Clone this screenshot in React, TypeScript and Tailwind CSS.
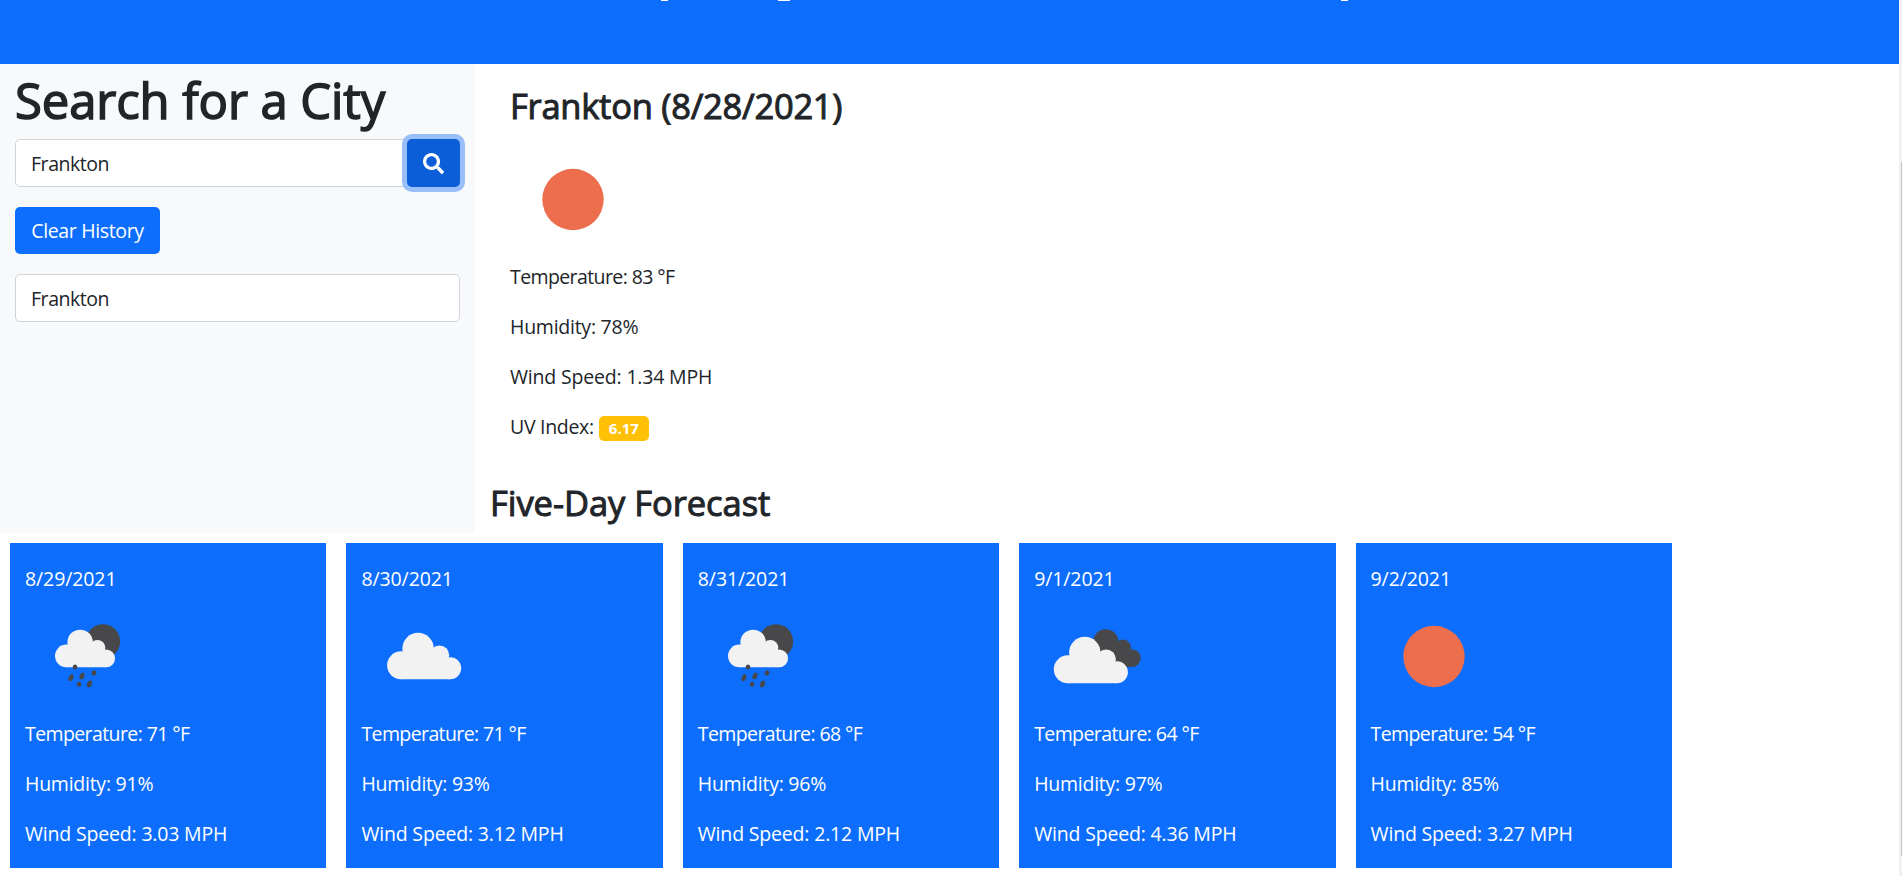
import React from "react";
import { FaSearch } from "react-icons/fa";

type IconKind = "sun" | "rain" | "cloud" | "broken";

interface Day {
  date: string;
  icon: IconKind;
  temp: string;
  humidity: string;
  wind: string;
}

const days: Day[] = [
  { date: "8/29/2021", icon: "rain", temp: "71", humidity: "91", wind: "3.03" },
  { date: "8/30/2021", icon: "cloud", temp: "71", humidity: "93", wind: "3.12" },
  { date: "8/31/2021", icon: "rain", temp: "68", humidity: "96", wind: "2.12" },
  { date: "9/1/2021", icon: "broken", temp: "64", humidity: "97", wind: "4.36" },
  { date: "9/2/2021", icon: "sun", temp: "54", humidity: "85", wind: "3.27" },
];

const drops = [
  [50, 73, 2],
  [46, 83.7, 3.2],
  [57, 82, 3.2],
  [69, 79, 2.2],
  [54, 90.3, 2],
  [64.5, 90, 3.2],
];

function Cloud({ fill, transform }: { fill: string; transform?: string }) {
  return (
    <g fill={fill} transform={transform}>
      <circle cx="56.7" cy="55" r="15.7" />
      <circle cx="39.7" cy="71.8" r="14" />
      <circle cx="78" cy="61.8" r="9.8" />
      <circle cx="88.8" cy="74.8" r="11" />
      <path d="M42 57 L71 55 L87 66 L88.8 85.8 L39.7 85.8 Z" />
    </g>
  );
}

function WeatherIcon({ kind }: { kind: IconKind }) {
  return (
    <svg className="block h-[125px] w-[125px]" viewBox="0 0 125 125">
      {kind === "sun" && <circle cx="63" cy="62.5" r="30.7" fill="#ec6e4c" />}
      {kind === "cloud" && <Cloud fill="#f2f2f2" transform="translate(.4 -.5)" />}
      {kind === "broken" && (
        <>
          <Cloud fill="#48484a" transform="translate(25.8 3.5) scale(.81)" />
          <Cloud fill="#f2f2f2" transform="translate(-5.9 3.5)" />
        </>
      )}
      {kind === "rain" && (
        <>
          <circle cx="78" cy="47.5" r="17.2" fill="#48484a" />
          <Cloud fill="#f2f2f2" transform="translate(9.2 3.8) scale(.81)" />
          {drops.map(([x, y, r]) => (
            <ellipse
              key={`${x}-${y}`}
              cx={x}
              cy={y}
              rx="2.3"
              ry={r + 0.4}
              fill="#48484a"
              transform={`rotate(25 ${x} ${y})`}
            />
          ))}
        </>
      )}
    </svg>
  );
}

function Readings({ temp, humidity, wind }: { temp: string; humidity: string; wind: string }) {
  return (
    <>
      <p className="tracking-[-0.6px]">Temperature: {temp} °F</p>
      <p className="tracking-[-0.25px]">Humidity: {humidity}%</p>
      <p className="tracking-[-0.18px]">Wind Speed: {wind} MPH</p>
    </>
  );
}

function DayCard({ day }: { day: Day }) {
  return (
    <div className="h-[325px] w-[316.4px] bg-[#0d6efd] px-[15px] pt-[21px] text-white">
      <p className="tracking-[-0.1px]">{day.date}</p>
      <WeatherIcon kind={day.icon} />
      <div className="flex flex-col gap-5">
        <Readings temp={day.temp} humidity={day.humidity} wind={day.wind} />
      </div>
    </div>
  );
}

export default function App() {
  return (
    <div className="flex h-[876px] w-full overflow-hidden bg-white font-['Open_Sans','Noto_Sans',sans-serif] text-[19.5px] leading-[30px] tracking-[-0.2px] text-[#212529]">
      <div className="flex w-[1899px] shrink-0 flex-col">
        <header className="h-16 shrink-0 bg-[#0d6efd]">
          <svg className="block h-px w-full" viewBox="0 0 1899 1" fill="#fff">
            <rect x="661" width="7" height="1" />
            <rect x="778" width="12" height="1" />
            <rect x="1341" width="7" height="1" />
          </svg>
        </header>
        <div className="flex h-[469px] shrink-0">
          <aside className="w-[474.75px] shrink-0 bg-[#f8f9fa] px-[15px]">
            <h1 className="mb-[10px] h-[65px] pt-[6px] text-[49px] leading-[60px] tracking-[-0.1px] whitespace-nowrap [-webkit-text-stroke:1.5px_#212529]">
              Search for a City
            </h1>
            <div className="flex h-12 w-[445px] tracking-[-0.45px]">
              <div className="flex-1 rounded-l-[5px] border border-[#ced4da] bg-white pt-[9px] pl-[15px]">
                Frankton
              </div>
              <button className="flex w-[53px] items-center justify-center rounded-[5px] bg-[#0b5ed7] text-white shadow-[0_0_0_5px_#98bff9]">
                <FaSearch className="size-[21px]" />
              </button>
            </div>
            <button className="mt-5 flex h-[47px] w-[145px] items-center justify-center rounded-[5px] bg-[#0d6efd] tracking-[-0.35px] whitespace-nowrap text-white">
              Clear History
            </button>
            <div className="mt-5 h-12 w-[445px] rounded-[5px] border border-[#ced4da] bg-white pt-[9px] pl-[15px] tracking-[-0.45px]">
              Frankton
            </div>
          </aside>
          <main className="flex-1 pl-[15.25px]">
            <div className="pl-5">
              <h3 className="h-[73px] pt-[21px] text-[34.5px] leading-[42px] tracking-[-0.25px] [-webkit-text-stroke:1px_#212529]">
                Frankton (8/28/2021)
              </h3>
              <WeatherIcon kind="sun" />
              <div className="flex flex-col gap-5">
                <Readings temp="83" humidity="78" wind="1.34" />
                <p className="flex items-center gap-[5px] tracking-[-0.3px]">
                  <span>UV Index:</span>
                  <span className="mt-[3px] flex h-[25px] w-[50px] items-center justify-center rounded-[5px] bg-[#ffc107] text-[15px] leading-none font-bold tracking-normal text-white">
                    6.17
                  </span>
                </p>
              </div>
            </div>
            <h3 className="mt-[40px] text-[34.5px] leading-[42px] tracking-[-0.05px] [-webkit-text-stroke:1px_#212529]">
              Five-Day Forecast
            </h3>
          </main>
        </div>
        <section className="flex gap-5 pt-[10px] pl-[10px]">
          {days.map((d) => (
            <DayCard key={d.date} day={d} />
          ))}
        </section>
      </div>
      <div className="flex w-[3px] shrink-0 flex-col items-end bg-[#f1f1f1] pt-[162px]">
        <div className="h-[694px] w-px bg-[#c1c1c1]" />
      </div>
    </div>
  );
}
